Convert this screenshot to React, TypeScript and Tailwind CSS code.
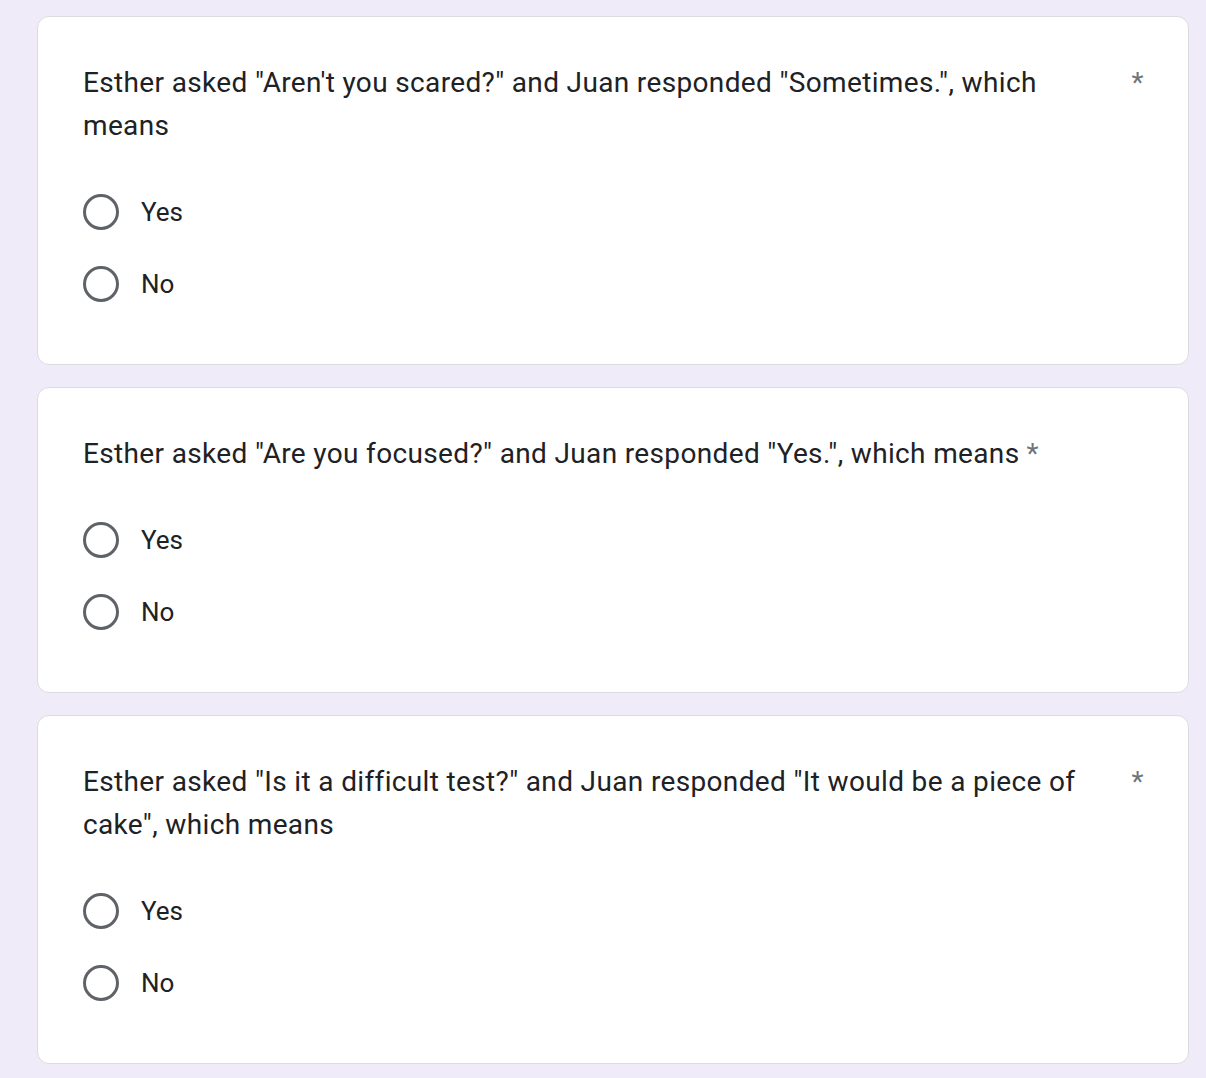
const questions = [
  {
    id: 1,
    title: 'Esther asked "Aren\'t you scared?" and Juan responded "Sometimes.", which means',
  },
  {
    id: 2,
    title: 'Esther asked "Are you focused?" and Juan responded "Yes.", which means',
  },
  {
    id: 3,
    title: 'Esther asked "Is it a difficult test?" and Juan responded "It would be a piece of cake", which means',
  },
];

const options = ['Yes', 'No'];

function QuestionCard({ title }: { title: string }) {
  return (
    <div className="bg-white border border-[#dadce0] rounded-[12px] pl-[45px] pr-[44px] pt-[44px] pb-[44px]">
      <div className="flex items-start text-[28px] leading-[43px] text-[#202124] tracking-[0.35px]">
        <span>{title}</span>
        <span className="pl-[7px] text-[#70757a] shrink-0">*</span>
      </div>
      <div className="mt-[29px] flex flex-col">
        {options.map((opt) => (
          <label key={opt} className="h-[72px] flex items-center cursor-pointer">
            <span className="w-[36px] h-[36px] rounded-full border-[3px] border-[#5f6368] shrink-0" />
            <span className="ml-[22px] text-[26px] text-[#202124]">{opt}</span>
          </label>
        ))}
      </div>
    </div>
  );
}

export default function App() {
  return (
    <div
      className="min-h-screen bg-[#f0ebf8] pt-[16px] pb-[15px]"
      style={{ fontFamily: 'Roboto, "Liberation Sans", Arial, sans-serif' }}
    >
      <div className="ml-[37px] w-[1152px] flex flex-col gap-[22px]">
        {questions.map((q) => (
          <QuestionCard key={q.id} title={q.title} />
        ))}
      </div>
    </div>
  );
}
